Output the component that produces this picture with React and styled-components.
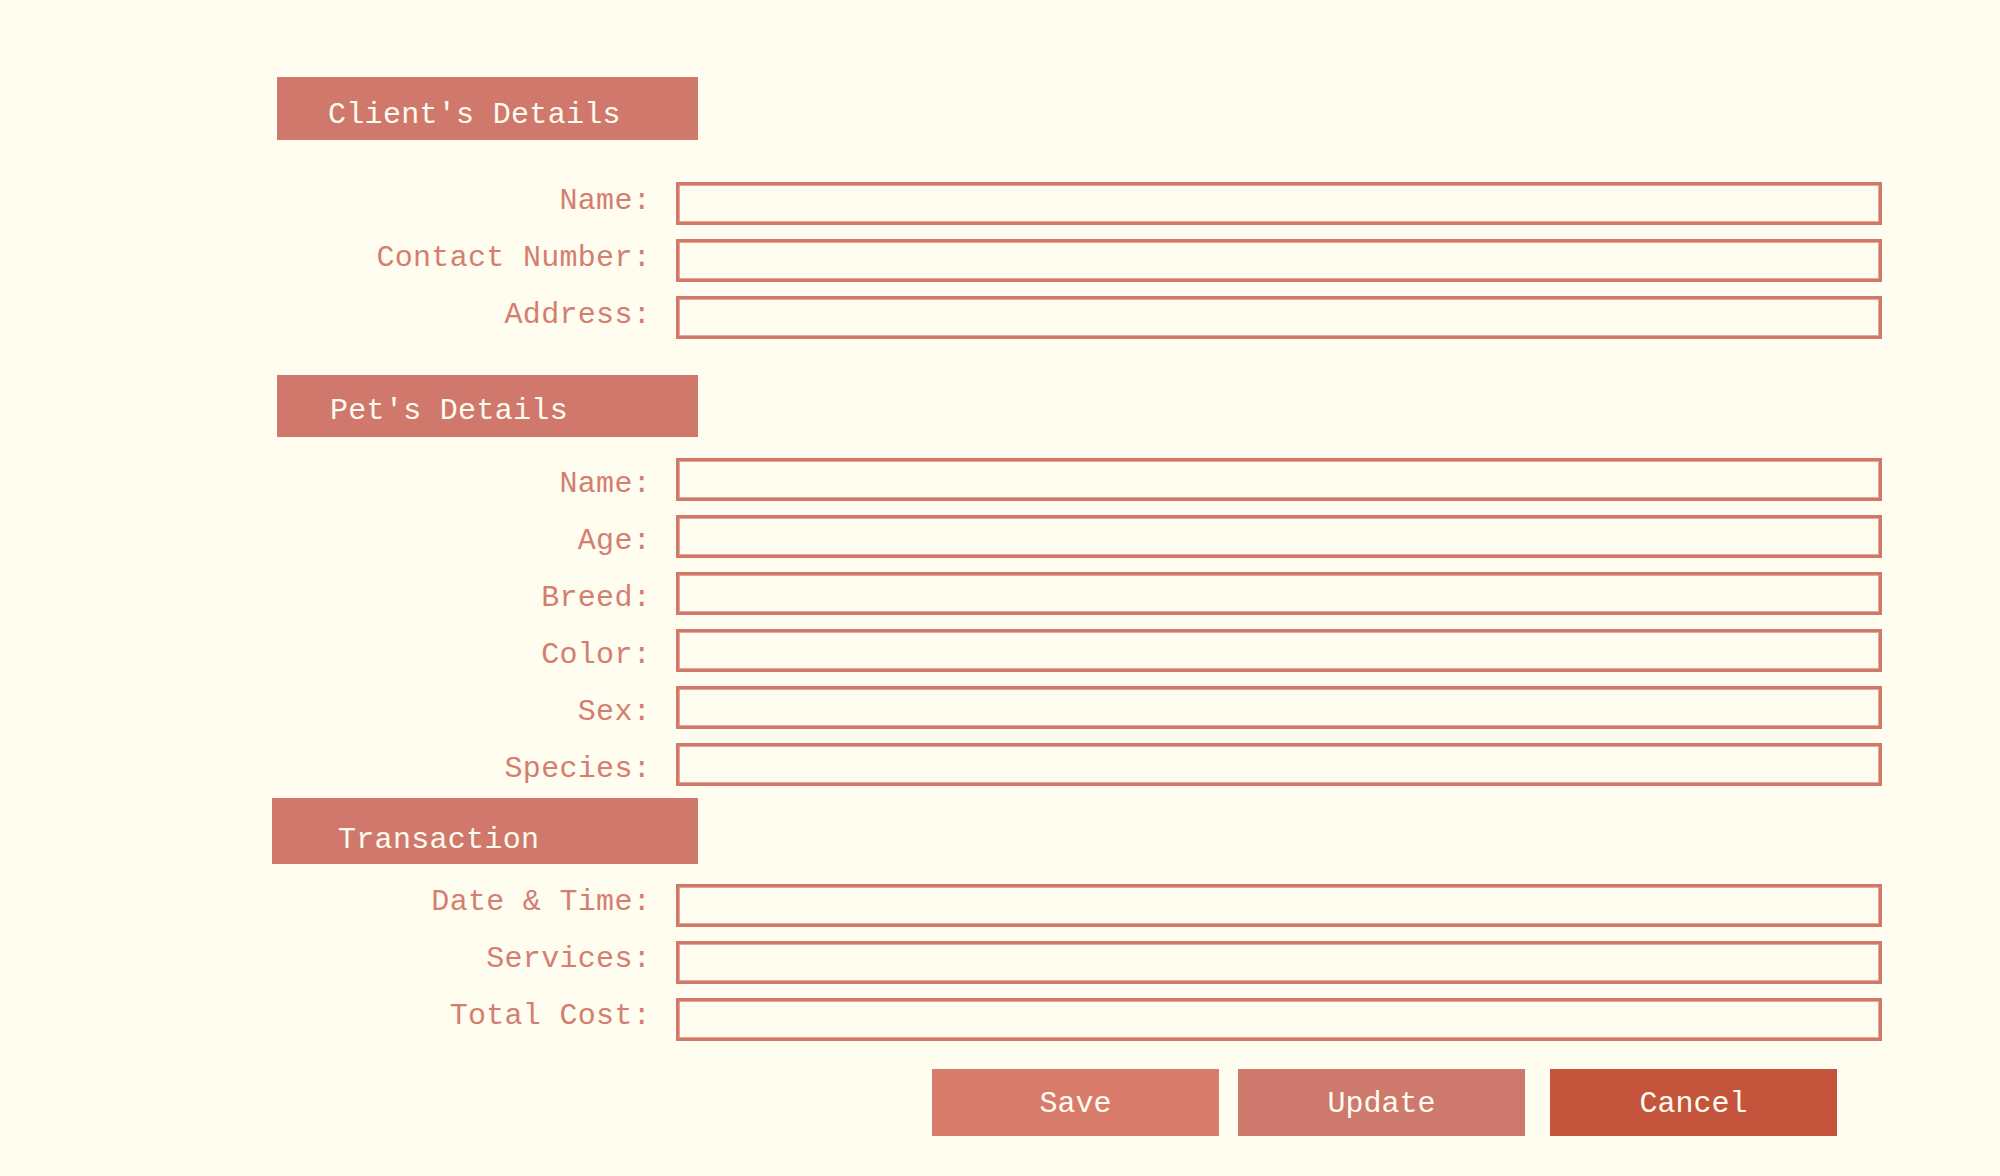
import React from "react";
import styled, { createGlobalStyle } from "styled-components";

const GlobalStyle = createGlobalStyle`
  html, body {
    margin: 0;
    padding: 0;
    background: #fffcf0;
  }
  body {
    font-family: "Liberation Mono", "DejaVu Sans Mono", monospace;
  }
`;

const Page = styled.div`
  min-height: 1176px;
  box-sizing: border-box;
  padding: 77px 0 0 272px;
  background: #fffcf0;
  display: flex;
  flex-direction: column;
  align-items: flex-start;
`;

const SectionTitle = styled.h2`
  margin: ${(p) => p.$top || 0}px 0 0 ${(p) => p.$indent || 0}px;
  box-sizing: border-box;
  width: ${(p) => p.$width}px;
  height: ${(p) => p.$height}px;
  padding: ${(p) => p.$padTop + 1}px 0 0 ${(p) => p.$padLeft}px;
  background: #cf786b;
  color: #fffcf0;
  font-size: 30px;
  font-weight: 400;
  line-height: 30px;
  letter-spacing: 0.3px;
`;

const Fields = styled.div`
  margin-top: ${(p) => p.$top}px;
  display: grid;
  grid-template-columns: 379px 1206px;
  column-gap: 25px;
  row-gap: 14px;
`;

const Label = styled.label`
  text-align: right;
  color: #d47e70;
  font-size: 30px;
  line-height: 30px;
  letter-spacing: 0.3px;
  padding-top: ${(p) => p.$shift}px;
  white-space: nowrap;
`;

const Input = styled.input`
  box-sizing: border-box;
  width: 1206px;
  height: 43px;
  margin: 0;
  border: 3px solid #d2786a;
  box-shadow: inset 0 0 0 1px #e4a899;
  background: transparent;
  outline: none;
  font-family: inherit;
  font-size: 22px;
  color: #9a4a3e;
  padding: 0 10px;
`;

const Buttons = styled.div`
  margin: 28px 0 0 660px;
  display: flex;
`;

const Button = styled.button`
  box-sizing: border-box;
  width: 287px;
  height: 67px;
  margin-left: ${(p) => p.$gap || 0}px;
  padding: 3px 0 0;
  border: none;
  background: ${(p) => p.$bg};
  color: #fffcf0;
  font-family: "Liberation Mono", "DejaVu Sans Mono", monospace;
  font-size: 30px;
  display: flex;
  align-items: center;
  justify-content: center;
  cursor: pointer;
`;

const sections = [
  {
    title: "Client's Details",
    head: { $top: 0, $indent: 5, $width: 421, $height: 63, $padTop: 22, $padLeft: 51 },
    fieldsTop: 42,
    shift: 4,
    fields: ["Name:", "Contact Number:", "Address:"],
  },
  {
    title: "Pet's Details",
    head: { $top: 36, $indent: 5, $width: 421, $height: 62, $padTop: 20, $padLeft: 53 },
    fieldsTop: 21,
    shift: 11,
    fields: ["Name:", "Age:", "Breed:", "Color:", "Sex:", "Species:"],
  },
  {
    title: "Transaction",
    head: { $top: 12, $indent: 0, $width: 426, $height: 66, $padTop: 26, $padLeft: 66 },
    fieldsTop: 20,
    shift: 3,
    fields: ["Date & Time:", "Services:", "Total Cost:"],
  },
];

export default function App() {
  return (
    <>
      <GlobalStyle />
      <Page>
        {sections.map((section) => (
          <React.Fragment key={section.title}>
            <SectionTitle {...section.head}>{section.title}</SectionTitle>
            <Fields $top={section.fieldsTop}>
              {section.fields.map((field) => (
                <React.Fragment key={field}>
                  <Label $shift={section.shift}>{field}</Label>
                  <Input type="text" />
                </React.Fragment>
              ))}
            </Fields>
          </React.Fragment>
        ))}
        <Buttons>
          <Button type="button" $bg="#d97b6b">Save</Button>
          <Button type="button" $bg="#ce796d" $gap={19}>Update</Button>
          <Button type="button" $bg="#c4543b" $gap={25}>Cancel</Button>
        </Buttons>
      </Page>
    </>
  );
}
